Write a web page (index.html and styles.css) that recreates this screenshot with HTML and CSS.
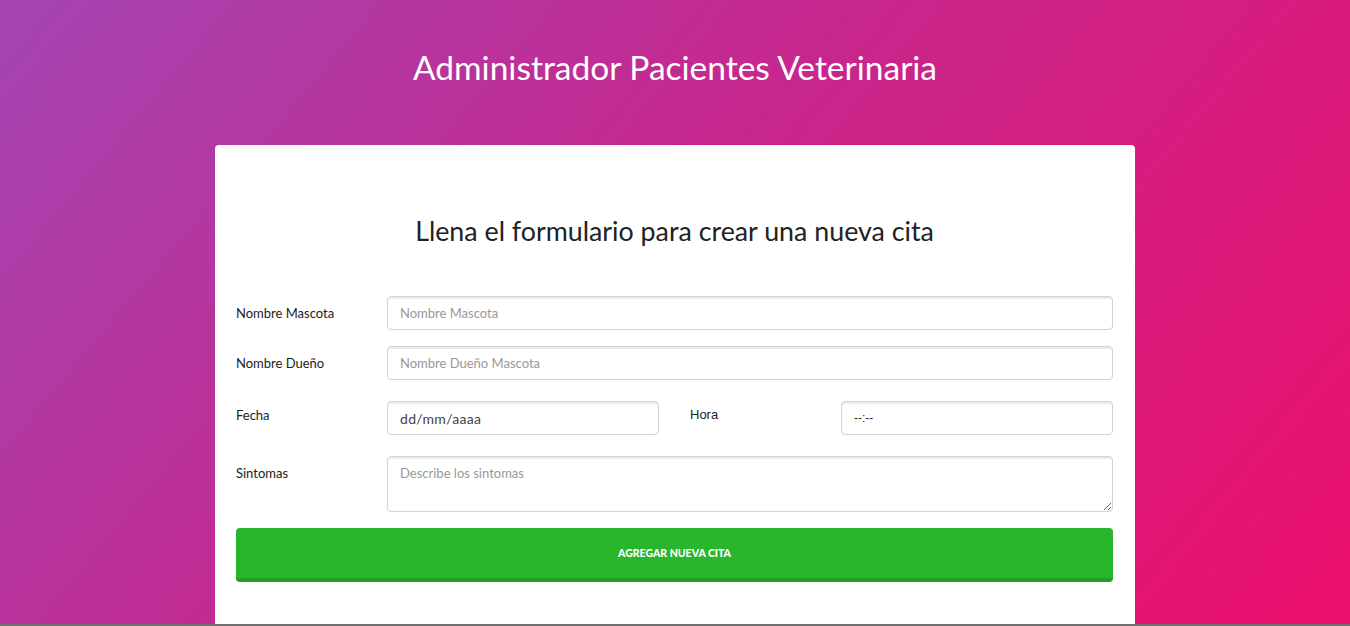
FILE: index.html
```html
<!DOCTYPE html>
<html lang="es">
<head>
<meta charset="utf-8">
<title>Administrador Pacientes Veterinaria</title>
<link rel="stylesheet" href="styles.css">
</head>
<body>
<header class="top">
  <h1 class="app-title">Administrador Pacientes Veterinaria</h1>
</header>
<main class="card">
  <h2 class="card-title">Llena el formulario para crear una nueva cita</h2>
  <form class="form">
    <div class="row">
      <label class="lbl" for="mascota">Nombre Mascota</label>
      <input class="field" id="mascota" type="text" placeholder="Nombre Mascota">
    </div>
    <div class="row">
      <label class="lbl" for="dueno">Nombre Dueño</label>
      <input class="field" id="dueno" type="text" placeholder="Nombre Dueño Mascota">
    </div>
    <div class="row row-split">
      <label class="lbl lbl-up" for="fecha">Fecha</label>
      <div class="field fake-date">dd/mm/aaaa</div>
      <span class="spacer"></span>
      <label class="lbl lbl-up lbl-arial" for="hora">Hora</label>
      <div class="field fake-time">--:--</div>
    </div>
    <div class="row">
      <label class="lbl lbl-top" for="sintomas">Sintomas</label>
      <textarea class="field area" id="sintomas" placeholder="Describe los sintomas"></textarea>
    </div>
    <button type="button" class="btn">Agregar Nueva Cita</button>
  </form>
</main>
<div class="taskbar"></div>
</body>
</html>
```
FILE: styles.css
```css
html, body {
  margin: 0;
  padding: 0;
}
body {
  height: 626px;
  overflow: hidden;
  font-family: Lato, "Liberation Sans", sans-serif;
  background: linear-gradient(130deg, #a445b2 0%, #c6278d 45%, #ec0f6c 100%);
  color: #222;
}
.top {
  padding-top: 45px;
  height: 99px;
  box-sizing: border-box;
  text-align: center;
}
.app-title {
  margin: 0;
  font-weight: 400;
  font-size: 33.5px;
  line-height: 44px;
  color: #fff;
}
.card {
  width: 920px;
  margin: 46px auto 0;
  background: #fff;
  border-radius: 4px;
  padding: 69px 22px 60px 21px;
  box-sizing: border-box;
}
.card-title {
  margin: 0 0 48px;
  text-align: center;
  font-weight: 400;
  font-size: 26.8px;
  line-height: 34px;
  color: #222;
}
.form {
  display: flex;
  flex-direction: column;
}
.row {
  display: grid;
  grid-template-columns: 151px 1fr;
  margin-bottom: 16px;
}
.row-split {
  grid-template-columns: 151px 272px 31px 151px 1fr;
  margin-top: 5px;
  margin-bottom: 21px;
}
.lbl {
  font-size: 13px;
  color: #222;
  padding-top: 9px;
}
.lbl-up {
  padding-top: 6px;
}
.lbl-top {
  padding-top: 9px;
}
.lbl-arial {
  font-family: "Liberation Sans", Arial, sans-serif;
}
.field {
  box-sizing: border-box;
  height: 34px;
  border: 1px solid #ced4da;
  border-radius: 4px;
  box-shadow: inset 0 2px 0 rgba(0, 0, 0, 0.075);
  padding: 0 12px;
  font-family: Lato, "Liberation Sans", sans-serif;
  font-size: 13px;
  color: #555;
  background: #fff;
  outline: none;
}
.field::placeholder {
  color: #999;
}
.fake-date {
  display: flex;
  align-items: center;
  font-size: 14px;
  color: #444;
  letter-spacing: 0.3px;
}
.fake-time {
  display: flex;
  align-items: center;
  font-family: "Liberation Sans", Arial, sans-serif;
  font-size: 12px;
  color: #333;
}
.area {
  height: 56px;
  padding: 8px 12px;
  resize: vertical;
  display: block;
  width: 100%;
}
.btn {
  height: 54px;
  border: none;
  border-bottom: 4px solid #23a127;
  border-radius: 4px;
  background: #28b62c;
  color: #fff;
  font-family: Lato, "Liberation Sans", sans-serif;
  font-weight: 900;
  font-size: 10.5px;
  text-transform: uppercase;
  padding: 0;
  margin-top: 0;
}
.taskbar {
  position: fixed;
  left: 0;
  right: 0;
  bottom: 0;
  height: 2px;
  background: #707070;
}
```
